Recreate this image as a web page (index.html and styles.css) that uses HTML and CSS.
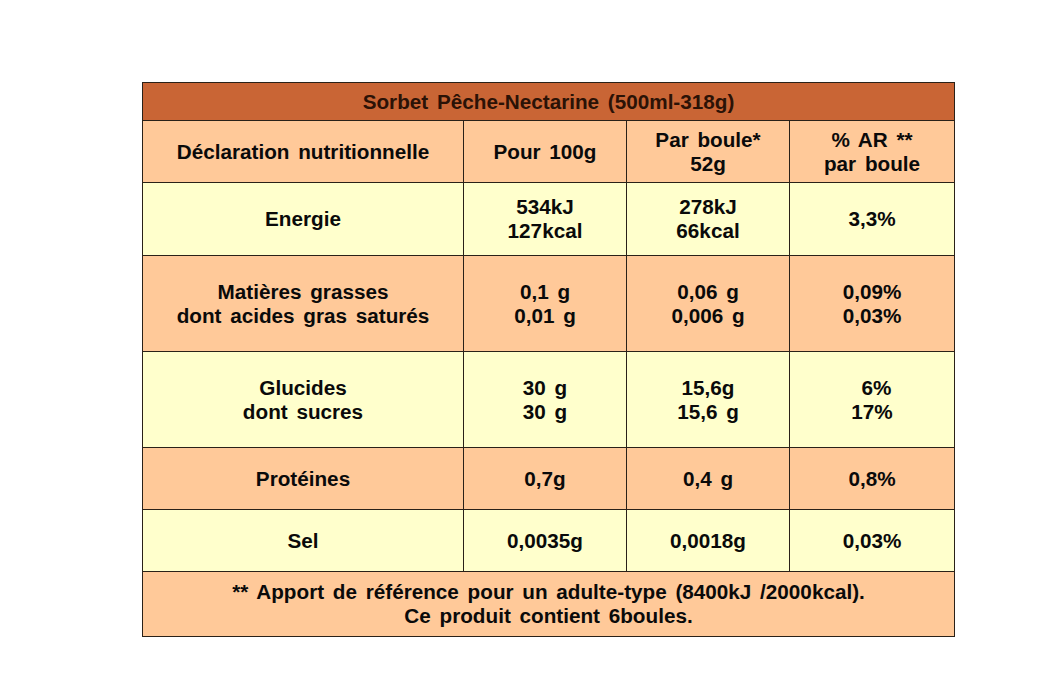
FILE: index.html
```html
<!DOCTYPE html>
<html lang="fr">
<head>
<meta charset="utf-8">
<title>Sorbet Pêche-Nectarine</title>
<link rel="stylesheet" href="styles.css">
</head>
<body>
<div class="page">
<table class="nutri">
  <colgroup>
    <col class="c1"><col class="c2"><col class="c3"><col class="c4">
  </colgroup>
  <tr class="title"><td colspan="4">Sorbet Pêche-Nectarine (500ml-318g)</td></tr>
  <tr class="peach h62"><td>Déclaration nutritionnelle</td><td>Pour 100g</td><td>Par boule*<br>52g</td><td>% AR **<br>par boule</td></tr>
  <tr class="yellow h73"><td>Energie</td><td>534kJ<br>127kcal</td><td>278kJ<br>66kcal</td><td>3,3%</td></tr>
  <tr class="peach h96"><td>Matières grasses<br>dont acides gras saturés</td><td>0,1 g<br>0,01 g</td><td>0,06 g<br>0,006 g</td><td>0,09%<br>0,03%</td></tr>
  <tr class="yellow h96"><td>Glucides<br>dont sucres</td><td>30 g<br>30 g</td><td>15,6g<br>15,6 g</td><td>&nbsp;6%<br>17%</td></tr>
  <tr class="peach h62"><td>Protéines</td><td>0,7g</td><td>0,4 g</td><td>0,8%</td></tr>
  <tr class="yellow h62"><td>Sel</td><td>0,0035g</td><td>0,0018g</td><td>0,03%</td></tr>
  <tr class="peach h65"><td colspan="4">** Apport de référence pour un adulte-type (8400kJ /2000kcal).<br>Ce produit contient 6boules.</td></tr>
</table>
</div>
</body>
</html>
```
FILE: styles.css
```css
html, body {
  margin: 0;
  padding: 0;
  background: #ffffff;
}
.page {
  padding: 82px 0 0 142px;
}
.nutri {
  border-collapse: collapse;
  table-layout: fixed;
  width: 812px;
  font-family: "Liberation Sans", Arial, sans-serif;
  font-weight: bold;
  font-size: 20.7px;
  line-height: 24px;
  color: #0a0a0a;
  border: 1px solid #6b5a4a;
}
.c1 { width: 321px; }
.c2 { width: 163px; }
.c3 { width: 163px; }
.c4 { width: 165px; }
.nutri td {
  border: 1px solid #2a2118;
  text-align: center;
  vertical-align: middle;
  padding: 0;
  word-spacing: 3px;
}
.title td {
  background: #c96535;
  color: #2b1206;
  height: 37px;
  line-height: 22px;
}
.peach td { background: #ffc999; }
.yellow td { background: #ffffcc; }
.h62 td { height: 61px; }
.h65 td { height: 64px; }
.h73 td { height: 72px; }
.h96 td { height: 95px; }
```
